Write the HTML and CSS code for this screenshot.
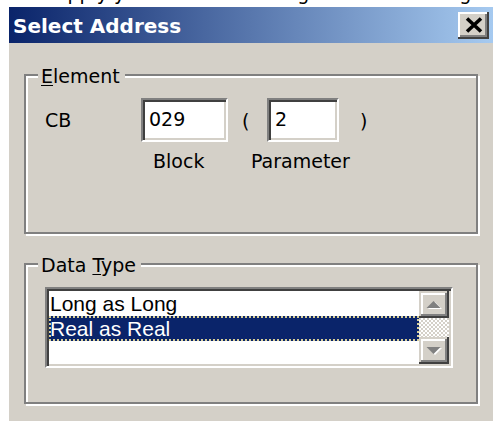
FILE: index.html
```html
<!DOCTYPE html>
<html lang="en">
<head>
<meta charset="utf-8">
<title>Select Address</title>
<link rel="stylesheet" href="styles.css">
</head>
<body>
  <div class="doc-line">
    <p>and apply your address settings in the following dialog</p>
  </div>

  <div class="dialog">
    <div class="titlebar">
      <span class="title">Select Address</span>
      <button class="close" type="button" aria-label="Close">
        <svg width="18" height="16" viewBox="0 0 18 16" aria-hidden="true">
          <path d="M2 1.5 L16 14.5 M16 1.5 L2 14.5" stroke="#000" stroke-width="3.6" fill="none"/>
        </svg>
      </button>
    </div>

    <div class="dialog-body">
      <div class="group group-element">
        <span class="group-label"><u>E</u>lement</span>
        <div class="elem-row">
          <span class="elem-name">CB</span>
          <div class="field field-block">029</div>
          <span class="paren paren-open">(</span>
          <div class="field field-param">2</div>
          <span class="paren paren-close">)</span>
        </div>
        <div class="caption-row">
          <span class="caption caption-block">Block</span>
          <span class="caption caption-param">Parameter</span>
        </div>
      </div>

      <div class="group group-type">
        <span class="group-label">Data <u>T</u>ype</span>
        <div class="listbox">
          <ul class="list-items">
            <li>Long as Long</li>
            <li class="selected">Real as Real</li>
          </ul>
          <div class="scrollbar">
            <div class="sb-btn">
              <svg width="18" height="10" viewBox="0 0 18 10" aria-hidden="true">
                <path d="M3 9 L10 2 L17 9 Z" fill="#fff"/>
                <path d="M1.5 8 L8.5 1 L15.5 8 Z" fill="#808080"/>
              </svg>
            </div>
            <div class="sb-track"></div>
            <div class="sb-btn">
              <svg width="18" height="10" viewBox="0 0 18 10" aria-hidden="true">
                <path d="M3 2 L10 9 L17 2 Z" fill="#fff"/>
                <path d="M1.5 1 L8.5 8 L15.5 1 Z" fill="#808080"/>
              </svg>
            </div>
          </div>
        </div>
      </div>
    </div>
  </div>
</body>
</html>
```

FILE: styles.css
```css
* {
  box-sizing: border-box;
}

html,
body {
  margin: 0;
  padding: 0;
  background: #ffffff;
  font-family: "DejaVu Sans", "Noto Sans", sans-serif;
  font-size: 19px;
  color: #000;
}

body {
  width: 493px;
  height: 421px;
  overflow: hidden;
}

/* strip of page text running above the window */
.doc-line {
  height: 7px;
  overflow: hidden;
}

.doc-line p {
  margin: -17px 0 0 14px;
  line-height: 20px;
  white-space: nowrap;
}

/* window */
.dialog {
  margin-left: 9px;
  background: #d4d0c8;
}

.titlebar {
  height: 36px;
  display: flex;
  align-items: center;
  justify-content: space-between;
  padding: 0 4px 0 4px;
  background: linear-gradient(to right, #0a246a 0%, #a6caf0 100%);
}

.title {
  color: #fff;
  font-weight: bold;
  font-size: 20px;
  line-height: 24px;
  padding-top: 1px;
}

.close {
  width: 31px;
  height: 27px;
  margin-top: 1px;
  padding: 0 0 1px 0;
  border: none;
  background: #d4d0c8;
  display: flex;
  align-items: center;
  justify-content: center;
  box-shadow:
    inset -2px -2px 0 #404040,
    inset 2px 2px 0 #ffffff,
    inset -4px -4px 0 #808080;
}

.dialog-body {
  padding: 31px 15px 17px 15px;
}

/* etched group boxes */
.group {
  position: relative;
  border: 2px solid #808080;
  box-shadow: inset 2px 2px 0 #ffffff, 2px 2px 0 #ffffff;
}

.group-label {
  position: absolute;
  top: -11px;
  left: 12px;
  padding: 0 5px 0 3px;
  line-height: 22px;
  background: #d4d0c8;
}

.group-label u {
  text-decoration-thickness: 1px;
  text-underline-offset: 2px;
}

.group-element {
  height: 160px;
  margin-bottom: 29px;
  padding: 22px 0 0 19px;
}

.group-type {
  height: 141px;
  padding: 22px 0 0 19px;
}

/* element row */
.elem-row {
  display: flex;
  align-items: center;
  height: 44px;
}

.elem-name {
  width: 96px;
  line-height: 22px;
}

.field {
  height: 44px;
  padding-left: 6px;
  line-height: 38px;
  background: #fff;
  border: 2px solid;
  border-color: #808080 #ffffff #ffffff #808080;
  box-shadow: inset 2px 2px 0 #404040, inset -2px -2px 0 #d4d0c8;
}

.field-block {
  width: 87px;
}

.field-param {
  width: 72px;
}

.paren {
  line-height: 22px;
  padding-top: 2px;
}

.paren-open {
  width: 39px;
  padding-left: 14px;
}

.paren-close {
  margin-left: 21px;
}

.caption-row {
  display: flex;
  margin-top: 8px;
  line-height: 22px;
}

.caption-block {
  margin-left: 108px;
  width: 98px;
}

/* list box */
.listbox {
  width: 408px;
  height: 81px;
  display: flex;
  background: #fff;
  border: 2px solid;
  border-color: #808080 #ffffff #ffffff #808080;
  box-shadow: inset 2px 2px 0 #404040, inset -2px -2px 0 #d4d0c8;
  padding: 2px;
}

.list-items {
  flex: 1;
  margin: 0;
  padding: 0;
  list-style: none;
  font-family: "Liberation Sans", Arial, sans-serif;
  font-size: 21px;
}

.list-items li {
  height: 25px;
  line-height: 25px;
  padding-left: 1px;
  white-space: nowrap;
}

.list-items li.selected {
  background: #0a246a;
  color: #fff;
  outline: 2px dotted #d8cf98;
  outline-offset: -2px;
}

.scrollbar {
  width: 30px;
  display: flex;
  flex-direction: column;
}

.sb-btn {
  height: 27px;
  display: flex;
  align-items: center;
  justify-content: center;
  background: #d4d0c8;
  box-shadow:
    inset -2px -2px 0 #404040,
    inset 2px 2px 0 #d4d0c8,
    inset -4px -4px 0 #808080,
    inset 4px 4px 0 #ffffff;
}

.sb-track {
  flex: 1;
  background: repeating-conic-gradient(#ffffff 0 25%, #d4d0c8 0 50%) 0 0 / 4px 4px;
}
```
